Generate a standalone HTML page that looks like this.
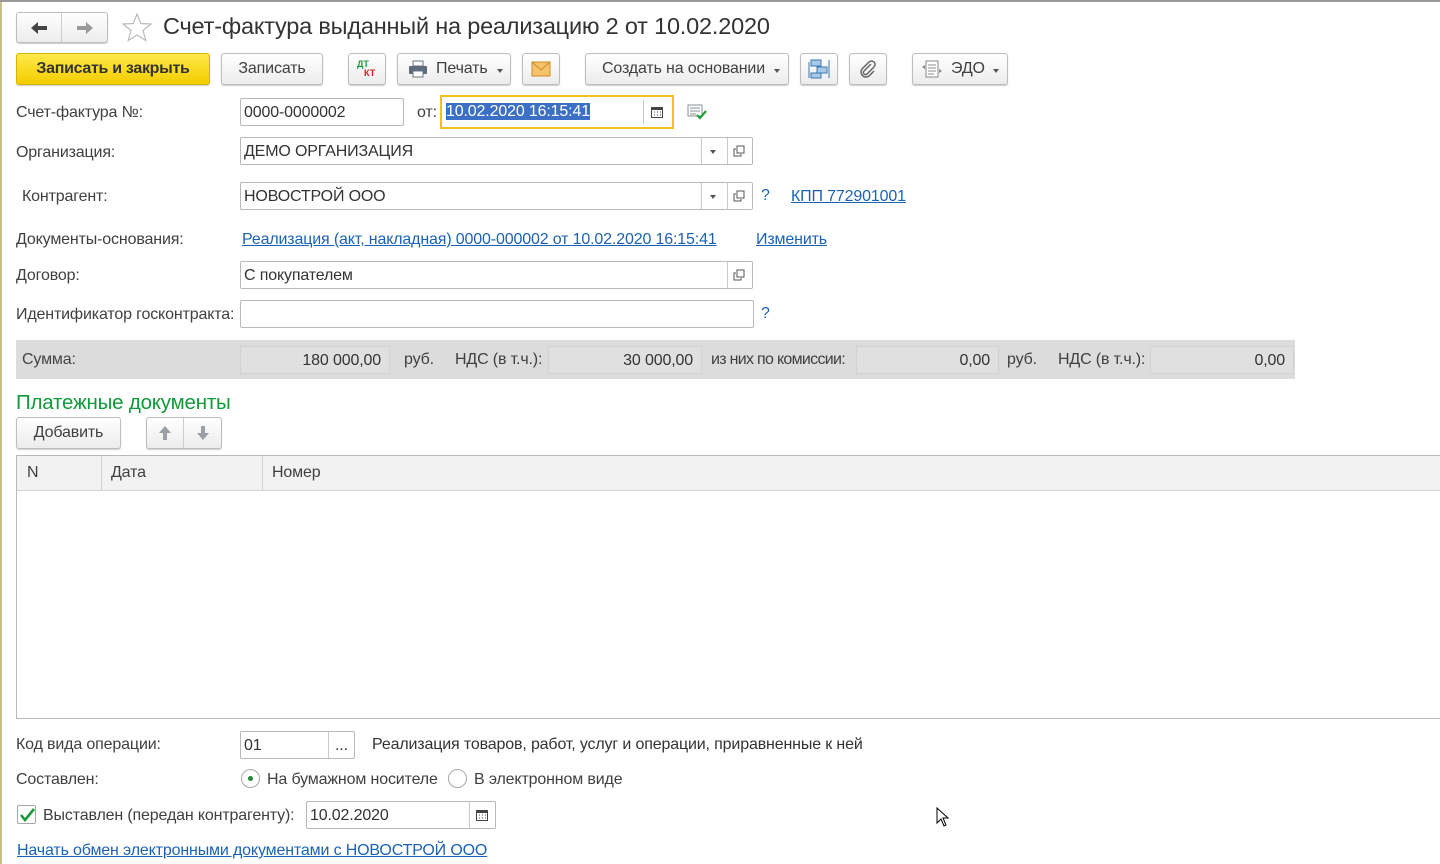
<!DOCTYPE html>
<html><head><meta charset="utf-8">
<style>
*{box-sizing:border-box;margin:0;padding:0}
body{width:1440px;height:864px;background:#fff;font-family:"Liberation Sans",Arial,sans-serif;font-size:16px;color:#404040;position:relative;overflow:hidden;letter-spacing:-0.15px}
.a{position:absolute;white-space:nowrap}
.btn{position:absolute;height:32px;border:1px solid #bdbdbd;border-radius:3px;background:linear-gradient(#fff,#ececec);box-shadow:0 1px 1px rgba(0,0,0,.2);display:flex;align-items:center;justify-content:center;color:#404040}
.inp{position:absolute;height:28px;border:1px solid #b9b9b9;border-radius:2px;background:#fff;padding-left:3px;line-height:27px;color:#333}
.sep{position:absolute;top:0;bottom:0;border-left:1px solid #c9c9c9}
a,.lnk{color:#1a62b5;text-decoration:underline}
.dd{position:absolute;width:0;height:0;border-left:3px solid transparent;border-right:3px solid transparent;border-top:4px solid #555}
.ro{position:absolute;top:6px;height:28px;background:#e0e0e0;border:1px solid #d2d2d2;text-align:right;padding-right:8px;line-height:27px;color:#333}
</style></head><body>
<div class="a" style="left:0;top:0;width:2px;height:864px;background:#c9bf8a"></div>
<div class="a" style="left:0;top:0;width:1440px;height:2px;background:#9a9a9a"></div>

<div class="btn" style="left:16px;top:12px;width:92px;height:31px;justify-content:flex-start">
 <div style="width:46px;height:100%;display:flex;align-items:center;justify-content:center;border-right:1px solid #ccc"><svg width="18" height="14"><path d="M1 7L8 1V5H17V9H8V13Z" fill="#444"/></svg></div>
 <div style="width:46px;display:flex;justify-content:center"><svg width="18" height="14"><path d="M17 7L10 1V5H1V9H10V13Z" fill="#999"/></svg></div>
</div>
<svg class="a" style="left:121px;top:12px" width="32" height="30"><path d="M16 2L19.8 11.5 30 12 22 18.5 24.8 28.5 16 23 7.2 28.5 10 18.5 2 12 12.2 11.5Z" fill="none" stroke="#bbb" stroke-width="1.2"/></svg>
<div class="a" style="left:163px;top:13px;font-size:23.5px;color:#333;letter-spacing:-0.2px">Счет-фактура выданный на реализацию 2 от 10.02.2020</div>

<div class="btn" style="left:16px;top:53px;width:194px;background:linear-gradient(#ffe94a,#f4cd00);border-color:#d8b400;font-weight:bold;color:#333;letter-spacing:-0.3px">Записать и закрыть</div>
<div class="btn" style="left:221px;top:53px;width:102px">Записать</div>
<div class="btn" style="left:348px;top:53px;width:38px"><div style="position:relative;width:24px;height:22px;font-size:9px;font-weight:bold;letter-spacing:0"><span class="a" style="left:2px;top:1px;color:#1a9c3a">ДТ</span><span class="a" style="left:9px;top:10px;color:#d21f1f">КТ</span></div></div>
<div class="btn" style="left:397px;top:53px;width:114px;justify-content:flex-start;padding-left:10px"><svg width="20" height="18"><rect x="5" y="1" width="10" height="5" fill="#fff" stroke="#6a7580"/><rect x="1" y="6" width="18" height="8" rx="1" fill="#5d6b7a"/><rect x="5" y="11" width="10" height="6" fill="#fff" stroke="#6a7580"/></svg><span style="margin-left:8px">Печать</span><div class="dd" style="left:99px;top:15px"></div></div>
<div class="btn" style="left:522px;top:53px;width:38px"><svg width="20" height="16"><rect x="1" y="1" width="18" height="14" fill="#f5c36b" stroke="#d08a25"/><path d="M1 1L10 9 19 1" fill="none" stroke="#d08a25"/></svg></div>
<div class="btn" style="left:585px;top:53px;width:204px;justify-content:flex-start;padding-left:16px">Создать на основании<div class="dd" style="left:188px;top:15px"></div></div>
<div class="btn" style="left:800px;top:53px;width:38px"><svg width="22" height="22"><rect x="3" y="2" width="10" height="6" fill="#a8c8e8" stroke="#3d78b0"/><rect x="9" y="9" width="10" height="6" fill="#a8c8e8" stroke="#3d78b0"/><rect x="3" y="15" width="10" height="5" fill="#a8c8e8" stroke="#3d78b0"/><path d="M1 4V20M21 2V20" stroke="#3d78b0"/></svg></div>
<div class="btn" style="left:849px;top:53px;width:38px"><svg width="18" height="18"><path d="M12 4L5 11a2 2 0 0 0 3 3l7-7a3.5 3.5 0 0 0-5-5L3 9a5 5 0 0 0 7 7l5-5" fill="none" stroke="#666" stroke-width="1.5"/></svg></div>
<div class="btn" style="left:912px;top:53px;width:96px;justify-content:flex-start;padding-left:8px"><svg width="22" height="20"><rect x="5" y="2" width="12" height="16" fill="#fff" stroke="#888"/><path d="M7 6H15M7 9H15M7 12H15M7 15H13" stroke="#888"/><path d="M1 8L4 6V10ZM21 12L18 10V14Z" fill="#888"/></svg><span style="margin-left:8px">ЭДО</span><div class="dd" style="left:80px;top:15px"></div></div>

<div class="a" style="left:16px;top:104px">Счет-фактура №:</div>
<div class="inp" style="left:240px;top:98px;width:164px">0000-0000002</div>
<div class="a" style="left:417px;top:104px">от:</div>
<div class="a" style="left:440px;top:95px;width:234px;height:34px;border:2px solid #f2c21b;background:#fff"></div>
<div class="inp" style="left:443px;top:98px;width:228px;border:none;padding-left:3px;line-height:28px"><span style="background:#3c6fc6;color:#fff">10.02.2020 16:15:41</span><div class="sep" style="left:200px;top:2px;bottom:2px"></div><svg class="a" style="left:208px;top:8px" width="12" height="12"><rect x="0.5" y="1.5" width="11" height="10" fill="#fff" stroke="#444"/><rect x="0" y="1" width="12" height="3" fill="#444"/><path d="M3 6h1M6 6h1M9 6h1M3 9h1M6 9h1M9 9h1" stroke="#444"/></svg></div>
<svg class="a" style="left:687px;top:104px" width="20" height="16"><rect x="1" y="1" width="14" height="11" fill="#fff" stroke="#8a9098"/><path d="M3 4H13M3 7H13M3 10H9" stroke="#8a9098"/><path d="M10 11L13 14 19 7" fill="none" stroke="#22a033" stroke-width="2.2"/></svg>

<div class="a" style="left:16px;top:144px">Организация:</div>
<div class="inp" style="left:240px;top:137px;width:513px">ДЕМО ОРГАНИЗАЦИЯ<div class="sep" style="left:460px"></div><div class="dd" style="left:469px;top:12px"></div><div class="sep" style="left:486px"></div><svg class="a" style="left:492px;top:7px" width="12" height="12"><rect x="4" y="1" width="7" height="7" fill="#fff" stroke="#555"/><path d="M3 4H1V11H8V9" fill="none" stroke="#555"/></svg></div>

<div class="a" style="left:22px;top:188px">Контрагент:</div>
<div class="inp" style="left:240px;top:182px;width:513px">НОВОСТРОЙ ООО<div class="sep" style="left:460px"></div><div class="dd" style="left:469px;top:12px"></div><div class="sep" style="left:486px"></div><svg class="a" style="left:492px;top:7px" width="12" height="12"><rect x="4" y="1" width="7" height="7" fill="#fff" stroke="#555"/><path d="M3 4H1V11H8V9" fill="none" stroke="#555"/></svg></div>
<div class="a lnk" style="left:761px;top:187px;text-decoration:none">?</div>
<div class="a lnk" style="left:791px;top:188px">КПП 772901001</div>

<div class="a" style="left:16px;top:231px">Документы-основания:</div>
<div class="a lnk" style="left:242px;top:231px">Реализация (акт, накладная) 0000-000002 от 10.02.2020 16:15:41</div>
<div class="a lnk" style="left:756px;top:231px">Изменить</div>

<div class="a" style="left:16px;top:267px">Договор:</div>
<div class="inp" style="left:240px;top:261px;width:513px">С покупателем<div class="sep" style="left:486px"></div><svg class="a" style="left:492px;top:7px" width="12" height="12"><rect x="4" y="1" width="7" height="7" fill="#fff" stroke="#555"/><path d="M3 4H1V11H8V9" fill="none" stroke="#555"/></svg></div>

<div class="a" style="left:16px;top:306px">Идентификатор госконтракта:</div>
<div class="inp" style="left:240px;top:300px;width:514px"></div>
<div class="a lnk" style="left:761px;top:305px;text-decoration:none">?</div>

<div class="a" style="left:16px;top:340px;width:1279px;height:39px;background:#dcdcdc">
 <div class="a" style="left:6px;top:11px;color:#444">Сумма:</div>
 <div class="ro" style="left:224px;width:150px">180 000,00</div>
 <div class="a" style="left:388px;top:11px">руб.</div>
 <div class="a" style="left:439px;top:11px">НДС (в т.ч.):</div>
 <div class="ro" style="left:532px;width:154px">30 000,00</div>
 <div class="a" style="left:695px;top:11px;letter-spacing:-0.7px">из них по комиссии:</div>
 <div class="ro" style="left:840px;width:143px">0,00</div>
 <div class="a" style="left:991px;top:11px">руб.</div>
 <div class="a" style="left:1042px;top:11px">НДС (в т.ч.):</div>
 <div class="ro" style="left:1134px;width:144px">0,00</div>
</div>

<div class="a" style="left:16px;top:391px;font-size:20.5px;color:#109a3a;letter-spacing:-0.2px">Платежные документы</div>
<div class="btn" style="left:16px;top:417px;width:105px">Добавить</div>
<div class="btn" style="left:146px;top:417px;width:76px;justify-content:flex-start">
 <div style="width:37px;height:100%;display:flex;align-items:center;justify-content:center;border-right:1px solid #ccc"><svg width="14" height="16"><path d="M7 1L13 8H9V15H5V8H1Z" fill="#9aa0a6"/></svg></div>
 <div style="width:37px;display:flex;justify-content:center"><svg width="14" height="16"><path d="M7 15L13 8H9V1H5V8H1Z" fill="#9aa0a6"/></svg></div>
</div>

<div class="a" style="left:16px;top:455px;width:1430px;height:264px;border:1px solid #b9b9b9;background:#fff">
 <div class="a" style="left:0;top:0;width:100%;height:35px;background:#f2f2f2;border-bottom:1px solid #d2d2d2"></div>
 <div class="a" style="left:84px;top:0;height:35px;border-left:1px solid #d2d2d2"></div>
 <div class="a" style="left:245px;top:0;height:35px;border-left:1px solid #d2d2d2"></div>
 <div class="a" style="left:10px;top:8px">N</div>
 <div class="a" style="left:94px;top:8px">Дата</div>
 <div class="a" style="left:255px;top:8px">Номер</div>
</div>

<div class="a" style="left:16px;top:736px">Код вида операции:</div>
<div class="inp" style="left:240px;top:731px;width:115px">01<div class="sep" style="left:87px"></div><span class="a" style="left:94px;top:0">...</span></div>
<div class="a" style="left:372px;top:736px;color:#333">Реализация товаров, работ, услуг и операции, приравненные к ней</div>

<div class="a" style="left:16px;top:771px">Составлен:</div>
<div class="a" style="left:241px;top:769px;width:19px;height:19px;border:1px solid #a8a8a8;border-radius:50%;background:#fff"><div style="position:absolute;left:6px;top:6px;width:5px;height:5px;border-radius:50%;background:#1a8a3a"></div></div>
<div class="a" style="left:267px;top:771px">На бумажном носителе</div>
<div class="a" style="left:448px;top:769px;width:19px;height:19px;border:1px solid #a8a8a8;border-radius:50%;background:#fff"></div>
<div class="a" style="left:474px;top:771px">В электронном виде</div>

<div class="a" style="left:17px;top:805px;width:19px;height:19px;border:1px solid #a8a8a8;border-radius:2px;background:#fff"><svg style="position:absolute;left:1px;top:1px" width="16" height="16"><path d="M2 8L6 13 15 2" fill="none" stroke="#1a9a3a" stroke-width="2.6"/></svg></div>
<div class="a" style="left:43px;top:807px">Выставлен (передан контрагенту):</div>
<div class="inp" style="left:306px;top:801px;width:190px">10.02.2020<div class="sep" style="left:162px"></div><svg class="a" style="left:169px;top:7px" width="12" height="12"><rect x="0.5" y="1.5" width="11" height="10" fill="#fff" stroke="#444"/><rect x="0" y="1" width="12" height="3" fill="#444"/><path d="M3 6h1M6 6h1M9 6h1M3 9h1M6 9h1M9 9h1" stroke="#444"/></svg></div>

<div class="a lnk" style="left:17px;top:842px">Начать обмен электронными документами с НОВОСТРОЙ ООО</div>

<svg class="a" style="left:936px;top:807px" width="14" height="20"><path d="M1 1V16L5 12 8 19 10 18 7 11H12Z" fill="#fff" stroke="#000"/></svg>
</body></html>
